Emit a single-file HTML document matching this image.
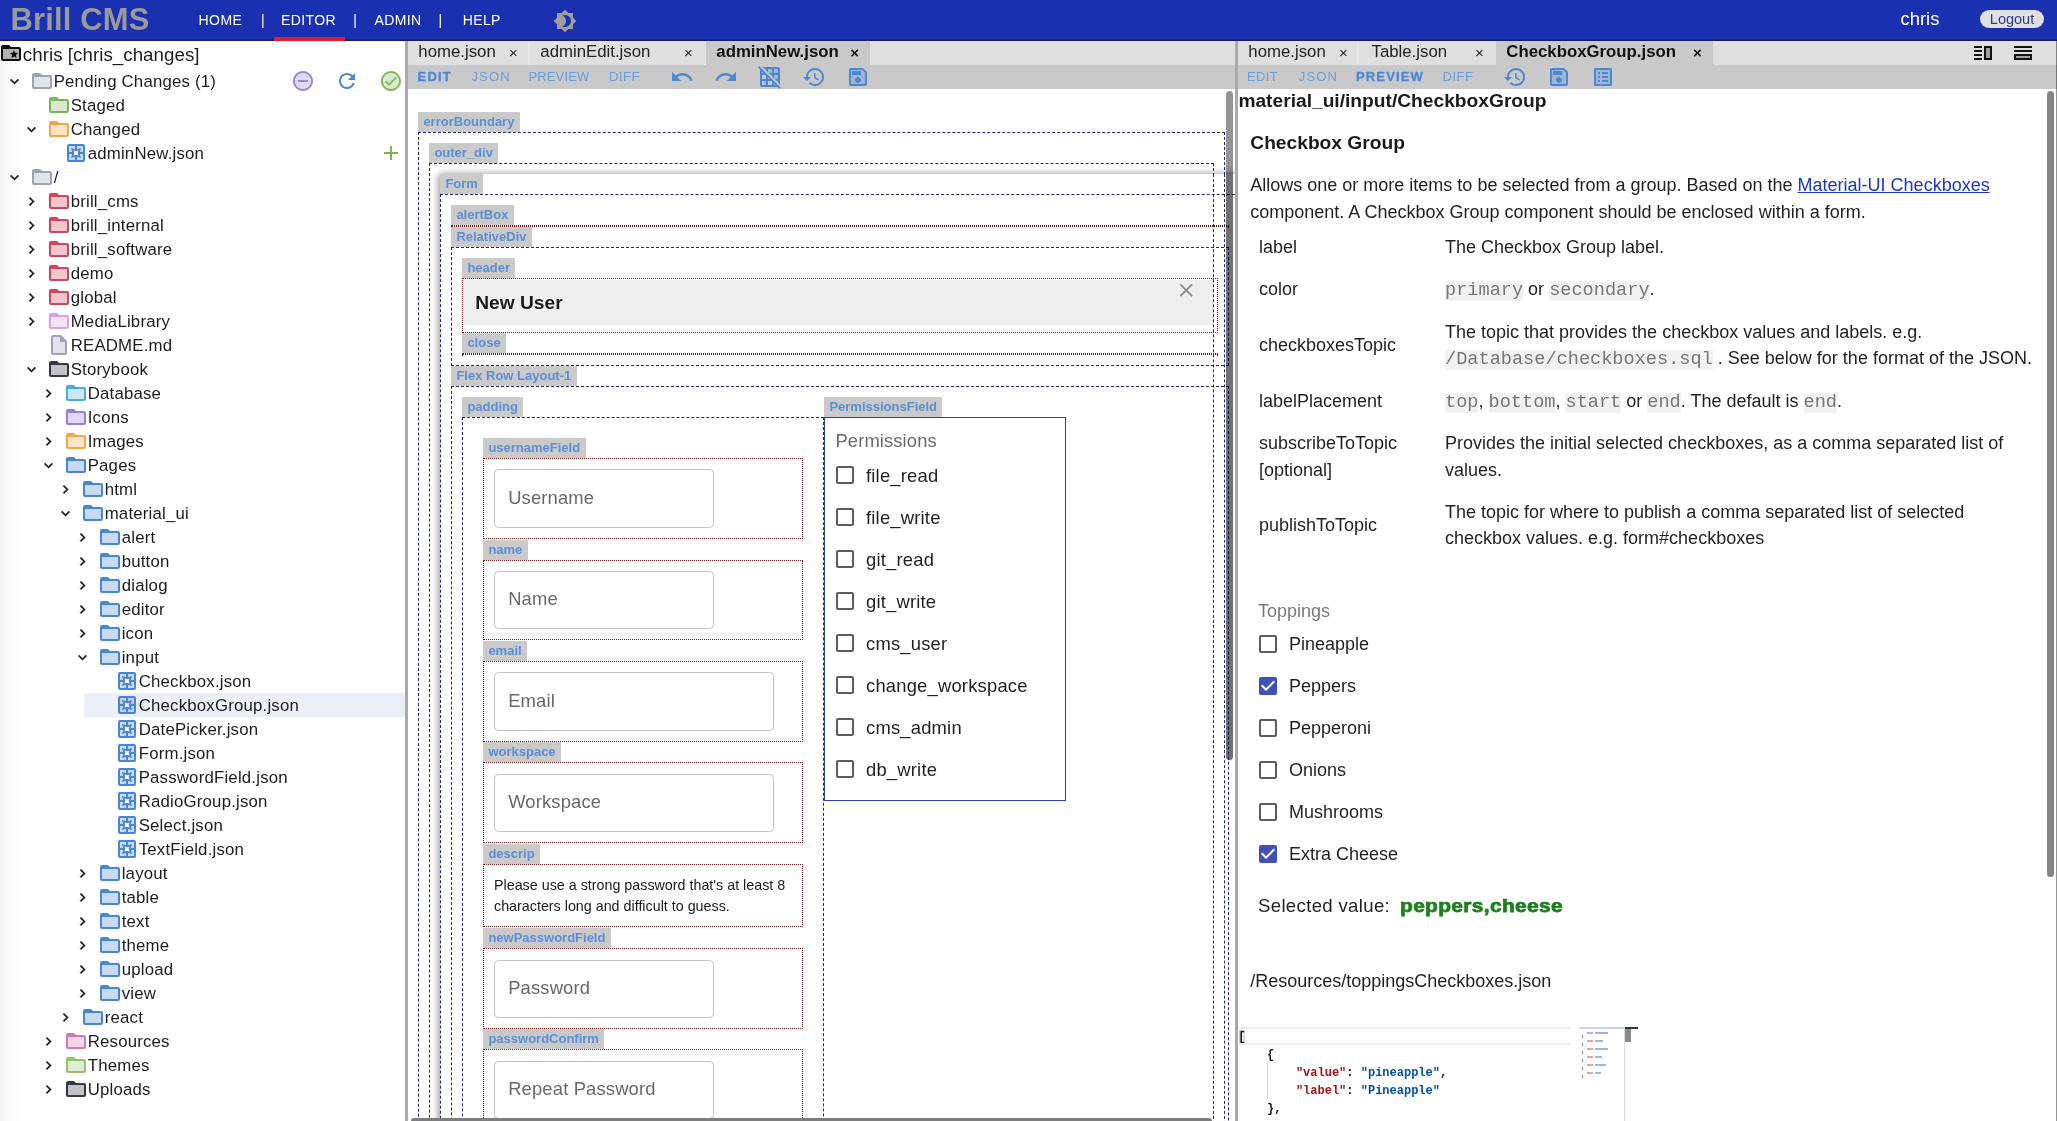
<!DOCTYPE html>
<html><head><meta charset="utf-8"><title>Brill CMS</title>
<style>
*{box-sizing:border-box;margin:0;padding:0}
html,body{width:2057px;height:1121px;overflow:hidden;background:#fff;font-family:"Liberation Sans",sans-serif;color:#212121}
body{position:relative;filter:contrast(1)}
.ic{position:absolute;display:block}
.abs{position:absolute}
#hdr{position:absolute;left:0;top:0;width:2057px;height:40.700px;background:#1931b0;box-shadow:inset 0 -1.500px 0 rgba(0,0,40,.4)}
#logo{position:absolute;left:10.500px;top:0;font-size:30.9px;font-weight:bold;color:#9a9a9a;line-height:39.800px;white-space:nowrap;letter-spacing:.2px}
.nav{position:absolute;top:0;height:40px;line-height:40px;font-size:14px;color:#fff;white-space:nowrap;letter-spacing:.4px}
#uline{position:absolute;left:274px;top:36.500px;width:71px;height:5px;background:#ea1a2e}
#user{position:absolute;left:1900.500px;top:0;line-height:38px;font-size:18.4px;color:#fff}
#logout{position:absolute;left:1980px;top:10px;width:64px;height:18.4px;border-radius:9.2px;background:#e0e0e0;color:#2c3a9c;font-size:14.5px;line-height:18.4px;text-align:center}
/* left tree */
#left{position:absolute;left:0;top:41px;width:405px;height:1080px;background:linear-gradient(90deg,#f5f5f5 0,#fafafa 9px,#fdfdfd 18px,#fff 30px);overflow:hidden}
.row{position:absolute;left:0;width:405px;height:24px;font-size:16.8px;letter-spacing:.2px;line-height:24px;white-space:nowrap;color:#1c1c1c}
.row span{position:absolute;top:.800px}
.sel{position:absolute;left:84px;top:652px;width:321px;height:24px;background:#eceef8}
#split1{position:absolute;left:405px;top:41px;width:3px;height:1080px;background:#aaa}
#split2{position:absolute;left:1235px;top:41px;width:3px;height:1080px;background:#aaa}
/* panels */
.tabbar{position:absolute;top:41px;height:24px;background:#dfdfdf;box-shadow:inset 0 1.200px 0 #dfe5fa}
.toolbar{position:absolute;top:64.800px;height:23.800px;background:#c9c9c9}
.tab{position:absolute;top:0;height:24px;font-size:16.8px;line-height:22px;color:#222;white-space:nowrap}
.tab.act{background:#c9c9c9;font-weight:bold;color:#111}
.tab .x{position:absolute;top:0;font-size:15px;line-height:23px;font-weight:normal}
.tsep{position:absolute;top:0;width:2px;height:24px;background:#e6e6e6}
.tb{position:absolute;top:0;font-size:13px;line-height:24px;color:#6a9fd9;white-space:nowrap}
.tb.b{font-weight:bold;color:#4a88d6;-webkit-text-stroke:.3px #4a88d6}

.lab{position:absolute;height:20px;padding:0 5.400px;background:#cacaca;color:#5a8fd5;font-size:13px;font-weight:bold;line-height:20px;white-space:nowrap}
.bx{position:absolute}
.bx.dash{border:1px dashed #1d2588}
.bx.dot{border:1px dotted #7e1010}
.bx.solid{border:1px solid #2f40b6}
.inp{position:absolute;border:1px solid #c2c2c2;border-radius:4.500px;background:#fff}
.sbar{position:absolute;background:#7e7e7e;border-radius:3.500px}
.lnk{color:#1b36c8;text-decoration:underline}
code{font-family:"Liberation Mono",monospace;font-size:18.6px;color:#777;background:#f1f1f1;padding:0;display:inline-block;line-height:20px;height:20px;vertical-align:baseline}
.mono{position:absolute;left:.300px;margin:0;font-family:"Liberation Mono",monospace;font-size:12px;font-weight:bold;line-height:18px;color:#111;white-space:pre}
#right{color:#1f1f1f}
</style></head><body>

<div id="hdr">
<div id="logo">Brill CMS</div>
<div class="nav" style="left:198.6px">HOME</div>
<div class="nav" style="left:261px">|</div>
<div class="nav" style="left:281px">EDITOR</div>
<div class="nav" style="left:353.3px">|</div>
<div class="nav" style="left:374.4px">ADMIN</div>
<div class="nav" style="left:438.4px">|</div>
<div class="nav" style="left:462.7px">HELP</div>
<svg class="ic" width="24" height="24" viewBox="0 0 24 24" fill="#9e9e9e" style="left:552.850px;top:8.900px"><path d="M20 8.690V4h-4.690L12 .690 8.690 4H4v4.690L.690 12 4 15.310V20h4.690L12 23.310 15.310 20H20v-4.690L23.310 12 20 8.690zM12 18c-.890 0-1.740-.200-2.500-.550C11.560 16.500 13 14.420 13 12s-1.440-4.500-3.500-5.450C10.260 6.200 11.110 6 12 6c3.310 0 6 2.690 6 6s-2.690 6-6 6z"/></svg>
<div id="user">chris</div><div id="logout">Logout</div>
</div><div id="uline"></div>
<div id="left">
<div class="sel"></div>
<svg class="ic" width="24" height="24" viewBox="0 0 24 24" fill="#111" style="left:-1px;top:0px"><path d="M4 8h16v10H4zM15 9l1.190 2.790 3.030.260-2.300 1.990.690 2.960L15 15.470l-2.610 1.570.690-2.960-2.300-1.990 3.030-.260L15 9z" opacity=".3"/><path d="M20 6h-8l-2-2H4c-1.100 0-2 .9-2 2v12c0 1.100.9 2 2 2h16c1.100 0 2-.9 2-2V8c0-1.100-.9-2-2-2zm0 12H4V8h16v10zm-6.920-3.960L12.390 17 15 15.470 17.610 17l-.690-2.960 2.300-1.990-3.030-.260L15 9l-1.190 2.790-3.030.260z"/></svg>
<div class="row" style="top:1px;font-size:18.7px;letter-spacing:.06px"><span style="left:22.800px;top:1.400px">chris [chris_changes]</span></div>
<div class="row" style="top:28px"><svg class="ic" width="17" height="17" viewBox="0 0 24 24" fill="#222" stroke="#222" stroke-width=".7" style="left:6.4px;top:3.500px"><path d="M16.59 8.59L12 13.17 7.41 8.59 6 10l6 6 6-6z"/></svg><svg class="ic" width="24" height="24" viewBox="0 0 24 24" fill="#9da3b4" style="left:30px;top:0"><path d="M4 8h16v10H4z" opacity=".3"/><path d="M20 6h-8l-2-2H4c-1.100 0-1.990.9-1.990 2L2 18c0 1.100.9 2 2 2h16c1.100 0 2-.9 2-2V8c0-1.100-.9-2-2-2zm0 12H4V8h16v10z"/></svg><span style="left:53.7px">Pending Changes (1)</span></div>
<div class="row" style="top:52px"><svg class="ic" width="24" height="24" viewBox="0 0 24 24" fill="#7fb55a" style="left:47px;top:0"><path d="M4 8h16v10H4z" opacity=".3"/><path d="M20 6h-8l-2-2H4c-1.100 0-1.990.9-1.990 2L2 18c0 1.100.9 2 2 2h16c1.100 0 2-.9 2-2V8c0-1.100-.9-2-2-2zm0 12H4V8h16v10z"/></svg><span style="left:70.7px">Staged</span></div>
<div class="row" style="top:76px"><svg class="ic" width="17" height="17" viewBox="0 0 24 24" fill="#222" stroke="#222" stroke-width=".7" style="left:23.4px;top:3.500px"><path d="M16.59 8.59L12 13.17 7.41 8.59 6 10l6 6 6-6z"/></svg><svg class="ic" width="24" height="24" viewBox="0 0 24 24" fill="#f0a848" style="left:47px;top:0"><path d="M4 8h16v10H4z" opacity=".3"/><path d="M20 6h-8l-2-2H4c-1.100 0-1.990.9-1.990 2L2 18c0 1.100.9 2 2 2h16c1.100 0 2-.9 2-2V8c0-1.100-.9-2-2-2zm0 12H4V8h16v10z"/></svg><span style="left:70.7px">Changed</span></div>
<div class="row" style="top:100px"><svg class="ic" width="24" height="24" viewBox="0 0 24 24" fill="#4a86cf" style="left:64px;top:0"><path d="M5 5h6v3L7 7l1 4H5zM13 5h6v6h-3l1-4-4 1zM5 13h3l-1 4 4-1v3H5zM19 13v6h-6v-3l4 1-1-4z" opacity=".3"/><path fill-rule="evenodd" d="M5 3h14a2 2 0 0 1 2 2v14a2 2 0 0 1-2 2H5a2 2 0 0 1-2-2V5a2 2 0 0 1 2-2zM5 5v6h3L7 7l4 1V5zM13 5v3l4-1-1 4h3V5zM5 13v6h6v-3l-4 1 1-4zM16 13l1 4-4-1v3h6v-6zM9.600 9.600L12 10.300l2.400-.700L13.700 12l.700 2.400L12 13.700l-2.400.700L10.300 12z"/></svg><span style="left:87.7px">adminNew.json</span></div>
<div class="row" style="top:124px"><svg class="ic" width="17" height="17" viewBox="0 0 24 24" fill="#222" stroke="#222" stroke-width=".7" style="left:6.4px;top:3.500px"><path d="M16.59 8.59L12 13.17 7.41 8.59 6 10l6 6 6-6z"/></svg><svg class="ic" width="24" height="24" viewBox="0 0 24 24" fill="#9da3b4" style="left:30px;top:0"><path d="M4 8h16v10H4z" opacity=".3"/><path d="M20 6h-8l-2-2H4c-1.100 0-1.990.9-1.990 2L2 18c0 1.100.9 2 2 2h16c1.100 0 2-.9 2-2V8c0-1.100-.9-2-2-2zm0 12H4V8h16v10z"/></svg><span style="left:53.7px">/</span></div>
<div class="row" style="top:148px"><svg class="ic" width="17" height="17" viewBox="0 0 24 24" fill="#222" stroke="#222" stroke-width=".7" style="left:23.4px;top:3.500px"><path d="M10 6L8.59 7.41 13.17 12l-4.58 4.59L10 18l6-6z"/></svg><svg class="ic" width="24" height="24" viewBox="0 0 24 24" fill="#d2455a" style="left:47px;top:0"><path d="M4 8h16v10H4z" opacity=".3"/><path d="M20 6h-8l-2-2H4c-1.100 0-1.990.9-1.990 2L2 18c0 1.100.9 2 2 2h16c1.100 0 2-.9 2-2V8c0-1.100-.9-2-2-2zm0 12H4V8h16v10z"/></svg><span style="left:70.7px">brill_cms</span></div>
<div class="row" style="top:172px"><svg class="ic" width="17" height="17" viewBox="0 0 24 24" fill="#222" stroke="#222" stroke-width=".7" style="left:23.4px;top:3.500px"><path d="M10 6L8.59 7.41 13.17 12l-4.58 4.59L10 18l6-6z"/></svg><svg class="ic" width="24" height="24" viewBox="0 0 24 24" fill="#d2455a" style="left:47px;top:0"><path d="M4 8h16v10H4z" opacity=".3"/><path d="M20 6h-8l-2-2H4c-1.100 0-1.990.9-1.990 2L2 18c0 1.100.9 2 2 2h16c1.100 0 2-.9 2-2V8c0-1.100-.9-2-2-2zm0 12H4V8h16v10z"/></svg><span style="left:70.7px">brill_internal</span></div>
<div class="row" style="top:196px"><svg class="ic" width="17" height="17" viewBox="0 0 24 24" fill="#222" stroke="#222" stroke-width=".7" style="left:23.4px;top:3.500px"><path d="M10 6L8.59 7.41 13.17 12l-4.58 4.59L10 18l6-6z"/></svg><svg class="ic" width="24" height="24" viewBox="0 0 24 24" fill="#d2455a" style="left:47px;top:0"><path d="M4 8h16v10H4z" opacity=".3"/><path d="M20 6h-8l-2-2H4c-1.100 0-1.990.9-1.990 2L2 18c0 1.100.9 2 2 2h16c1.100 0 2-.9 2-2V8c0-1.100-.9-2-2-2zm0 12H4V8h16v10z"/></svg><span style="left:70.7px">brill_software</span></div>
<div class="row" style="top:220px"><svg class="ic" width="17" height="17" viewBox="0 0 24 24" fill="#222" stroke="#222" stroke-width=".7" style="left:23.4px;top:3.500px"><path d="M10 6L8.59 7.41 13.17 12l-4.58 4.59L10 18l6-6z"/></svg><svg class="ic" width="24" height="24" viewBox="0 0 24 24" fill="#d2455a" style="left:47px;top:0"><path d="M4 8h16v10H4z" opacity=".3"/><path d="M20 6h-8l-2-2H4c-1.100 0-1.990.9-1.990 2L2 18c0 1.100.9 2 2 2h16c1.100 0 2-.9 2-2V8c0-1.100-.9-2-2-2zm0 12H4V8h16v10z"/></svg><span style="left:70.7px">demo</span></div>
<div class="row" style="top:244px"><svg class="ic" width="17" height="17" viewBox="0 0 24 24" fill="#222" stroke="#222" stroke-width=".7" style="left:23.4px;top:3.500px"><path d="M10 6L8.59 7.41 13.17 12l-4.58 4.59L10 18l6-6z"/></svg><svg class="ic" width="24" height="24" viewBox="0 0 24 24" fill="#d2455a" style="left:47px;top:0"><path d="M4 8h16v10H4z" opacity=".3"/><path d="M20 6h-8l-2-2H4c-1.100 0-1.990.9-1.990 2L2 18c0 1.100.9 2 2 2h16c1.100 0 2-.9 2-2V8c0-1.100-.9-2-2-2zm0 12H4V8h16v10z"/></svg><span style="left:70.7px">global</span></div>
<div class="row" style="top:268px"><svg class="ic" width="17" height="17" viewBox="0 0 24 24" fill="#222" stroke="#222" stroke-width=".7" style="left:23.4px;top:3.500px"><path d="M10 6L8.59 7.41 13.17 12l-4.58 4.59L10 18l6-6z"/></svg><svg class="ic" width="24" height="24" viewBox="0 0 24 24" fill="#d9a0e6" style="left:47px;top:0"><path d="M4 8h16v10H4z" opacity=".3"/><path d="M20 6h-8l-2-2H4c-1.100 0-1.990.9-1.990 2L2 18c0 1.100.9 2 2 2h16c1.100 0 2-.9 2-2V8c0-1.100-.9-2-2-2zm0 12H4V8h16v10z"/></svg><span style="left:70.7px">MediaLibrary</span></div>
<div class="row" style="top:292px"><svg class="ic" width="24" height="24" viewBox="0 0 24 24" fill="#9da3b4" style="left:47px;top:0"><path d="M13 4H6v16h12V9h-5V4z" opacity=".3"/><path d="M18 20H6V4h7v5h5v11zM14 2H6c-1.1 0-2 .9-2 2l.01 16c0 1.1.89 2 1.99 2H18c1.100 0 2-.9 2-2V8l-6-6z"/></svg><span style="left:70.7px">README.md</span></div>
<div class="row" style="top:316px"><svg class="ic" width="17" height="17" viewBox="0 0 24 24" fill="#222" stroke="#222" stroke-width=".7" style="left:23.4px;top:3.500px"><path d="M16.59 8.59L12 13.17 7.41 8.59 6 10l6 6 6-6z"/></svg><svg class="ic" width="24" height="24" viewBox="0 0 24 24" fill="#333842" style="left:47px;top:0"><path d="M4 8h16v10H4z" opacity=".3"/><path d="M20 6h-8l-2-2H4c-1.100 0-1.990.9-1.990 2L2 18c0 1.100.9 2 2 2h16c1.100 0 2-.9 2-2V8c0-1.100-.9-2-2-2zm0 12H4V8h16v10z"/></svg><span style="left:70.7px">Storybook</span></div>
<div class="row" style="top:340px"><svg class="ic" width="17" height="17" viewBox="0 0 24 24" fill="#222" stroke="#222" stroke-width=".7" style="left:40.4px;top:3.500px"><path d="M10 6L8.59 7.41 13.17 12l-4.58 4.59L10 18l6-6z"/></svg><svg class="ic" width="24" height="24" viewBox="0 0 24 24" fill="#4ab0cf" style="left:64px;top:0"><path d="M4 8h16v10H4z" opacity=".3"/><path d="M20 6h-8l-2-2H4c-1.100 0-1.990.9-1.990 2L2 18c0 1.100.9 2 2 2h16c1.100 0 2-.9 2-2V8c0-1.100-.9-2-2-2zm0 12H4V8h16v10z"/></svg><span style="left:87.7px">Database</span></div>
<div class="row" style="top:364px"><svg class="ic" width="17" height="17" viewBox="0 0 24 24" fill="#222" stroke="#222" stroke-width=".7" style="left:40.4px;top:3.500px"><path d="M10 6L8.59 7.41 13.17 12l-4.58 4.59L10 18l6-6z"/></svg><svg class="ic" width="24" height="24" viewBox="0 0 24 24" fill="#9a7fd6" style="left:64px;top:0"><path d="M4 8h16v10H4z" opacity=".3"/><path d="M20 6h-8l-2-2H4c-1.100 0-1.990.9-1.990 2L2 18c0 1.100.9 2 2 2h16c1.100 0 2-.9 2-2V8c0-1.100-.9-2-2-2zm0 12H4V8h16v10z"/></svg><span style="left:87.7px">Icons</span></div>
<div class="row" style="top:388px"><svg class="ic" width="17" height="17" viewBox="0 0 24 24" fill="#222" stroke="#222" stroke-width=".7" style="left:40.4px;top:3.500px"><path d="M10 6L8.59 7.41 13.17 12l-4.58 4.59L10 18l6-6z"/></svg><svg class="ic" width="24" height="24" viewBox="0 0 24 24" fill="#f0a848" style="left:64px;top:0"><path d="M4 8h16v10H4z" opacity=".3"/><path d="M20 6h-8l-2-2H4c-1.100 0-1.990.9-1.990 2L2 18c0 1.100.9 2 2 2h16c1.100 0 2-.9 2-2V8c0-1.100-.9-2-2-2zm0 12H4V8h16v10z"/></svg><span style="left:87.7px">Images</span></div>
<div class="row" style="top:412px"><svg class="ic" width="17" height="17" viewBox="0 0 24 24" fill="#222" stroke="#222" stroke-width=".7" style="left:40.4px;top:3.500px"><path d="M16.59 8.59L12 13.17 7.41 8.59 6 10l6 6 6-6z"/></svg><svg class="ic" width="24" height="24" viewBox="0 0 24 24" fill="#4a86cf" style="left:64px;top:0"><path d="M4 8h16v10H4z" opacity=".3"/><path d="M20 6h-8l-2-2H4c-1.100 0-1.990.9-1.990 2L2 18c0 1.100.9 2 2 2h16c1.100 0 2-.9 2-2V8c0-1.100-.9-2-2-2zm0 12H4V8h16v10z"/></svg><span style="left:87.7px">Pages</span></div>
<div class="row" style="top:436px"><svg class="ic" width="17" height="17" viewBox="0 0 24 24" fill="#222" stroke="#222" stroke-width=".7" style="left:57.4px;top:3.500px"><path d="M10 6L8.59 7.41 13.17 12l-4.58 4.59L10 18l6-6z"/></svg><svg class="ic" width="24" height="24" viewBox="0 0 24 24" fill="#4a86cf" style="left:81px;top:0"><path d="M4 8h16v10H4z" opacity=".3"/><path d="M20 6h-8l-2-2H4c-1.100 0-1.990.9-1.990 2L2 18c0 1.100.9 2 2 2h16c1.100 0 2-.9 2-2V8c0-1.100-.9-2-2-2zm0 12H4V8h16v10z"/></svg><span style="left:104.7px">html</span></div>
<div class="row" style="top:460px"><svg class="ic" width="17" height="17" viewBox="0 0 24 24" fill="#222" stroke="#222" stroke-width=".7" style="left:57.4px;top:3.500px"><path d="M16.59 8.59L12 13.17 7.41 8.59 6 10l6 6 6-6z"/></svg><svg class="ic" width="24" height="24" viewBox="0 0 24 24" fill="#4a86cf" style="left:81px;top:0"><path d="M4 8h16v10H4z" opacity=".3"/><path d="M20 6h-8l-2-2H4c-1.100 0-1.990.9-1.990 2L2 18c0 1.100.9 2 2 2h16c1.100 0 2-.9 2-2V8c0-1.100-.9-2-2-2zm0 12H4V8h16v10z"/></svg><span style="left:104.7px">material_ui</span></div>
<div class="row" style="top:484px"><svg class="ic" width="17" height="17" viewBox="0 0 24 24" fill="#222" stroke="#222" stroke-width=".7" style="left:74.4px;top:3.500px"><path d="M10 6L8.59 7.41 13.17 12l-4.58 4.59L10 18l6-6z"/></svg><svg class="ic" width="24" height="24" viewBox="0 0 24 24" fill="#4a86cf" style="left:98px;top:0"><path d="M4 8h16v10H4z" opacity=".3"/><path d="M20 6h-8l-2-2H4c-1.100 0-1.990.9-1.990 2L2 18c0 1.100.9 2 2 2h16c1.100 0 2-.9 2-2V8c0-1.100-.9-2-2-2zm0 12H4V8h16v10z"/></svg><span style="left:121.7px">alert</span></div>
<div class="row" style="top:508px"><svg class="ic" width="17" height="17" viewBox="0 0 24 24" fill="#222" stroke="#222" stroke-width=".7" style="left:74.4px;top:3.500px"><path d="M10 6L8.59 7.41 13.17 12l-4.58 4.59L10 18l6-6z"/></svg><svg class="ic" width="24" height="24" viewBox="0 0 24 24" fill="#4a86cf" style="left:98px;top:0"><path d="M4 8h16v10H4z" opacity=".3"/><path d="M20 6h-8l-2-2H4c-1.100 0-1.990.9-1.990 2L2 18c0 1.100.9 2 2 2h16c1.100 0 2-.9 2-2V8c0-1.100-.9-2-2-2zm0 12H4V8h16v10z"/></svg><span style="left:121.7px">button</span></div>
<div class="row" style="top:532px"><svg class="ic" width="17" height="17" viewBox="0 0 24 24" fill="#222" stroke="#222" stroke-width=".7" style="left:74.4px;top:3.500px"><path d="M10 6L8.59 7.41 13.17 12l-4.58 4.59L10 18l6-6z"/></svg><svg class="ic" width="24" height="24" viewBox="0 0 24 24" fill="#4a86cf" style="left:98px;top:0"><path d="M4 8h16v10H4z" opacity=".3"/><path d="M20 6h-8l-2-2H4c-1.100 0-1.990.9-1.990 2L2 18c0 1.100.9 2 2 2h16c1.100 0 2-.9 2-2V8c0-1.100-.9-2-2-2zm0 12H4V8h16v10z"/></svg><span style="left:121.7px">dialog</span></div>
<div class="row" style="top:556px"><svg class="ic" width="17" height="17" viewBox="0 0 24 24" fill="#222" stroke="#222" stroke-width=".7" style="left:74.4px;top:3.500px"><path d="M10 6L8.59 7.41 13.17 12l-4.58 4.59L10 18l6-6z"/></svg><svg class="ic" width="24" height="24" viewBox="0 0 24 24" fill="#4a86cf" style="left:98px;top:0"><path d="M4 8h16v10H4z" opacity=".3"/><path d="M20 6h-8l-2-2H4c-1.100 0-1.990.9-1.990 2L2 18c0 1.100.9 2 2 2h16c1.100 0 2-.9 2-2V8c0-1.100-.9-2-2-2zm0 12H4V8h16v10z"/></svg><span style="left:121.7px">editor</span></div>
<div class="row" style="top:580px"><svg class="ic" width="17" height="17" viewBox="0 0 24 24" fill="#222" stroke="#222" stroke-width=".7" style="left:74.4px;top:3.500px"><path d="M10 6L8.59 7.41 13.17 12l-4.58 4.59L10 18l6-6z"/></svg><svg class="ic" width="24" height="24" viewBox="0 0 24 24" fill="#4a86cf" style="left:98px;top:0"><path d="M4 8h16v10H4z" opacity=".3"/><path d="M20 6h-8l-2-2H4c-1.100 0-1.990.9-1.990 2L2 18c0 1.100.9 2 2 2h16c1.100 0 2-.9 2-2V8c0-1.100-.9-2-2-2zm0 12H4V8h16v10z"/></svg><span style="left:121.7px">icon</span></div>
<div class="row" style="top:604px"><svg class="ic" width="17" height="17" viewBox="0 0 24 24" fill="#222" stroke="#222" stroke-width=".7" style="left:74.4px;top:3.500px"><path d="M16.59 8.59L12 13.17 7.41 8.59 6 10l6 6 6-6z"/></svg><svg class="ic" width="24" height="24" viewBox="0 0 24 24" fill="#4a86cf" style="left:98px;top:0"><path d="M4 8h16v10H4z" opacity=".3"/><path d="M20 6h-8l-2-2H4c-1.100 0-1.990.9-1.990 2L2 18c0 1.100.9 2 2 2h16c1.100 0 2-.9 2-2V8c0-1.100-.9-2-2-2zm0 12H4V8h16v10z"/></svg><span style="left:121.7px">input</span></div>
<div class="row" style="top:628px"><svg class="ic" width="24" height="24" viewBox="0 0 24 24" fill="#4a86cf" style="left:115px;top:0"><path d="M5 5h6v3L7 7l1 4H5zM13 5h6v6h-3l1-4-4 1zM5 13h3l-1 4 4-1v3H5zM19 13v6h-6v-3l4 1-1-4z" opacity=".3"/><path fill-rule="evenodd" d="M5 3h14a2 2 0 0 1 2 2v14a2 2 0 0 1-2 2H5a2 2 0 0 1-2-2V5a2 2 0 0 1 2-2zM5 5v6h3L7 7l4 1V5zM13 5v3l4-1-1 4h3V5zM5 13v6h6v-3l-4 1 1-4zM16 13l1 4-4-1v3h6v-6zM9.600 9.600L12 10.300l2.400-.700L13.700 12l.700 2.400L12 13.700l-2.400.700L10.300 12z"/></svg><span style="left:138.7px">Checkbox.json</span></div>
<div class="row" style="top:652px"><svg class="ic" width="24" height="24" viewBox="0 0 24 24" fill="#4a86cf" style="left:115px;top:0"><path d="M5 5h6v3L7 7l1 4H5zM13 5h6v6h-3l1-4-4 1zM5 13h3l-1 4 4-1v3H5zM19 13v6h-6v-3l4 1-1-4z" opacity=".3"/><path fill-rule="evenodd" d="M5 3h14a2 2 0 0 1 2 2v14a2 2 0 0 1-2 2H5a2 2 0 0 1-2-2V5a2 2 0 0 1 2-2zM5 5v6h3L7 7l4 1V5zM13 5v3l4-1-1 4h3V5zM5 13v6h6v-3l-4 1 1-4zM16 13l1 4-4-1v3h6v-6zM9.600 9.600L12 10.300l2.400-.700L13.700 12l.700 2.400L12 13.700l-2.400.700L10.300 12z"/></svg><span style="left:138.7px">CheckboxGroup.json</span></div>
<div class="row" style="top:676px"><svg class="ic" width="24" height="24" viewBox="0 0 24 24" fill="#4a86cf" style="left:115px;top:0"><path d="M5 5h6v3L7 7l1 4H5zM13 5h6v6h-3l1-4-4 1zM5 13h3l-1 4 4-1v3H5zM19 13v6h-6v-3l4 1-1-4z" opacity=".3"/><path fill-rule="evenodd" d="M5 3h14a2 2 0 0 1 2 2v14a2 2 0 0 1-2 2H5a2 2 0 0 1-2-2V5a2 2 0 0 1 2-2zM5 5v6h3L7 7l4 1V5zM13 5v3l4-1-1 4h3V5zM5 13v6h6v-3l-4 1 1-4zM16 13l1 4-4-1v3h6v-6zM9.600 9.600L12 10.300l2.400-.700L13.700 12l.700 2.400L12 13.700l-2.400.700L10.300 12z"/></svg><span style="left:138.7px">DatePicker.json</span></div>
<div class="row" style="top:700px"><svg class="ic" width="24" height="24" viewBox="0 0 24 24" fill="#4a86cf" style="left:115px;top:0"><path d="M5 5h6v3L7 7l1 4H5zM13 5h6v6h-3l1-4-4 1zM5 13h3l-1 4 4-1v3H5zM19 13v6h-6v-3l4 1-1-4z" opacity=".3"/><path fill-rule="evenodd" d="M5 3h14a2 2 0 0 1 2 2v14a2 2 0 0 1-2 2H5a2 2 0 0 1-2-2V5a2 2 0 0 1 2-2zM5 5v6h3L7 7l4 1V5zM13 5v3l4-1-1 4h3V5zM5 13v6h6v-3l-4 1 1-4zM16 13l1 4-4-1v3h6v-6zM9.600 9.600L12 10.300l2.400-.700L13.700 12l.700 2.400L12 13.700l-2.400.700L10.300 12z"/></svg><span style="left:138.7px">Form.json</span></div>
<div class="row" style="top:724px"><svg class="ic" width="24" height="24" viewBox="0 0 24 24" fill="#4a86cf" style="left:115px;top:0"><path d="M5 5h6v3L7 7l1 4H5zM13 5h6v6h-3l1-4-4 1zM5 13h3l-1 4 4-1v3H5zM19 13v6h-6v-3l4 1-1-4z" opacity=".3"/><path fill-rule="evenodd" d="M5 3h14a2 2 0 0 1 2 2v14a2 2 0 0 1-2 2H5a2 2 0 0 1-2-2V5a2 2 0 0 1 2-2zM5 5v6h3L7 7l4 1V5zM13 5v3l4-1-1 4h3V5zM5 13v6h6v-3l-4 1 1-4zM16 13l1 4-4-1v3h6v-6zM9.600 9.600L12 10.300l2.400-.700L13.700 12l.700 2.400L12 13.700l-2.400.700L10.300 12z"/></svg><span style="left:138.7px">PasswordField.json</span></div>
<div class="row" style="top:748px"><svg class="ic" width="24" height="24" viewBox="0 0 24 24" fill="#4a86cf" style="left:115px;top:0"><path d="M5 5h6v3L7 7l1 4H5zM13 5h6v6h-3l1-4-4 1zM5 13h3l-1 4 4-1v3H5zM19 13v6h-6v-3l4 1-1-4z" opacity=".3"/><path fill-rule="evenodd" d="M5 3h14a2 2 0 0 1 2 2v14a2 2 0 0 1-2 2H5a2 2 0 0 1-2-2V5a2 2 0 0 1 2-2zM5 5v6h3L7 7l4 1V5zM13 5v3l4-1-1 4h3V5zM5 13v6h6v-3l-4 1 1-4zM16 13l1 4-4-1v3h6v-6zM9.600 9.600L12 10.300l2.400-.700L13.700 12l.700 2.400L12 13.700l-2.400.700L10.300 12z"/></svg><span style="left:138.7px">RadioGroup.json</span></div>
<div class="row" style="top:772px"><svg class="ic" width="24" height="24" viewBox="0 0 24 24" fill="#4a86cf" style="left:115px;top:0"><path d="M5 5h6v3L7 7l1 4H5zM13 5h6v6h-3l1-4-4 1zM5 13h3l-1 4 4-1v3H5zM19 13v6h-6v-3l4 1-1-4z" opacity=".3"/><path fill-rule="evenodd" d="M5 3h14a2 2 0 0 1 2 2v14a2 2 0 0 1-2 2H5a2 2 0 0 1-2-2V5a2 2 0 0 1 2-2zM5 5v6h3L7 7l4 1V5zM13 5v3l4-1-1 4h3V5zM5 13v6h6v-3l-4 1 1-4zM16 13l1 4-4-1v3h6v-6zM9.600 9.600L12 10.300l2.400-.700L13.700 12l.700 2.400L12 13.700l-2.400.700L10.300 12z"/></svg><span style="left:138.7px">Select.json</span></div>
<div class="row" style="top:796px"><svg class="ic" width="24" height="24" viewBox="0 0 24 24" fill="#4a86cf" style="left:115px;top:0"><path d="M5 5h6v3L7 7l1 4H5zM13 5h6v6h-3l1-4-4 1zM5 13h3l-1 4 4-1v3H5zM19 13v6h-6v-3l4 1-1-4z" opacity=".3"/><path fill-rule="evenodd" d="M5 3h14a2 2 0 0 1 2 2v14a2 2 0 0 1-2 2H5a2 2 0 0 1-2-2V5a2 2 0 0 1 2-2zM5 5v6h3L7 7l4 1V5zM13 5v3l4-1-1 4h3V5zM5 13v6h6v-3l-4 1 1-4zM16 13l1 4-4-1v3h6v-6zM9.600 9.600L12 10.300l2.400-.700L13.700 12l.700 2.400L12 13.700l-2.400.700L10.300 12z"/></svg><span style="left:138.7px">TextField.json</span></div>
<div class="row" style="top:820px"><svg class="ic" width="17" height="17" viewBox="0 0 24 24" fill="#222" stroke="#222" stroke-width=".7" style="left:74.4px;top:3.500px"><path d="M10 6L8.59 7.41 13.17 12l-4.58 4.59L10 18l6-6z"/></svg><svg class="ic" width="24" height="24" viewBox="0 0 24 24" fill="#4a86cf" style="left:98px;top:0"><path d="M4 8h16v10H4z" opacity=".3"/><path d="M20 6h-8l-2-2H4c-1.100 0-1.990.9-1.990 2L2 18c0 1.100.9 2 2 2h16c1.100 0 2-.9 2-2V8c0-1.100-.9-2-2-2zm0 12H4V8h16v10z"/></svg><span style="left:121.7px">layout</span></div>
<div class="row" style="top:844px"><svg class="ic" width="17" height="17" viewBox="0 0 24 24" fill="#222" stroke="#222" stroke-width=".7" style="left:74.4px;top:3.500px"><path d="M10 6L8.59 7.41 13.17 12l-4.58 4.59L10 18l6-6z"/></svg><svg class="ic" width="24" height="24" viewBox="0 0 24 24" fill="#4a86cf" style="left:98px;top:0"><path d="M4 8h16v10H4z" opacity=".3"/><path d="M20 6h-8l-2-2H4c-1.100 0-1.990.9-1.990 2L2 18c0 1.100.9 2 2 2h16c1.100 0 2-.9 2-2V8c0-1.100-.9-2-2-2zm0 12H4V8h16v10z"/></svg><span style="left:121.7px">table</span></div>
<div class="row" style="top:868px"><svg class="ic" width="17" height="17" viewBox="0 0 24 24" fill="#222" stroke="#222" stroke-width=".7" style="left:74.4px;top:3.500px"><path d="M10 6L8.59 7.41 13.17 12l-4.58 4.59L10 18l6-6z"/></svg><svg class="ic" width="24" height="24" viewBox="0 0 24 24" fill="#4a86cf" style="left:98px;top:0"><path d="M4 8h16v10H4z" opacity=".3"/><path d="M20 6h-8l-2-2H4c-1.100 0-1.990.9-1.990 2L2 18c0 1.100.9 2 2 2h16c1.100 0 2-.9 2-2V8c0-1.100-.9-2-2-2zm0 12H4V8h16v10z"/></svg><span style="left:121.7px">text</span></div>
<div class="row" style="top:892px"><svg class="ic" width="17" height="17" viewBox="0 0 24 24" fill="#222" stroke="#222" stroke-width=".7" style="left:74.4px;top:3.500px"><path d="M10 6L8.59 7.41 13.17 12l-4.58 4.59L10 18l6-6z"/></svg><svg class="ic" width="24" height="24" viewBox="0 0 24 24" fill="#4a86cf" style="left:98px;top:0"><path d="M4 8h16v10H4z" opacity=".3"/><path d="M20 6h-8l-2-2H4c-1.100 0-1.990.9-1.990 2L2 18c0 1.100.9 2 2 2h16c1.100 0 2-.9 2-2V8c0-1.100-.9-2-2-2zm0 12H4V8h16v10z"/></svg><span style="left:121.7px">theme</span></div>
<div class="row" style="top:916px"><svg class="ic" width="17" height="17" viewBox="0 0 24 24" fill="#222" stroke="#222" stroke-width=".7" style="left:74.4px;top:3.500px"><path d="M10 6L8.59 7.41 13.17 12l-4.58 4.59L10 18l6-6z"/></svg><svg class="ic" width="24" height="24" viewBox="0 0 24 24" fill="#4a86cf" style="left:98px;top:0"><path d="M4 8h16v10H4z" opacity=".3"/><path d="M20 6h-8l-2-2H4c-1.100 0-1.990.9-1.990 2L2 18c0 1.100.9 2 2 2h16c1.100 0 2-.9 2-2V8c0-1.100-.9-2-2-2zm0 12H4V8h16v10z"/></svg><span style="left:121.7px">upload</span></div>
<div class="row" style="top:940px"><svg class="ic" width="17" height="17" viewBox="0 0 24 24" fill="#222" stroke="#222" stroke-width=".7" style="left:74.4px;top:3.500px"><path d="M10 6L8.59 7.41 13.17 12l-4.58 4.59L10 18l6-6z"/></svg><svg class="ic" width="24" height="24" viewBox="0 0 24 24" fill="#4a86cf" style="left:98px;top:0"><path d="M4 8h16v10H4z" opacity=".3"/><path d="M20 6h-8l-2-2H4c-1.100 0-1.990.9-1.990 2L2 18c0 1.100.9 2 2 2h16c1.100 0 2-.9 2-2V8c0-1.100-.9-2-2-2zm0 12H4V8h16v10z"/></svg><span style="left:121.7px">view</span></div>
<div class="row" style="top:964px"><svg class="ic" width="17" height="17" viewBox="0 0 24 24" fill="#222" stroke="#222" stroke-width=".7" style="left:57.4px;top:3.500px"><path d="M10 6L8.59 7.41 13.17 12l-4.58 4.59L10 18l6-6z"/></svg><svg class="ic" width="24" height="24" viewBox="0 0 24 24" fill="#4a86cf" style="left:81px;top:0"><path d="M4 8h16v10H4z" opacity=".3"/><path d="M20 6h-8l-2-2H4c-1.100 0-1.990.9-1.990 2L2 18c0 1.100.9 2 2 2h16c1.100 0 2-.9 2-2V8c0-1.100-.9-2-2-2zm0 12H4V8h16v10z"/></svg><span style="left:104.7px">react</span></div>
<div class="row" style="top:988px"><svg class="ic" width="17" height="17" viewBox="0 0 24 24" fill="#222" stroke="#222" stroke-width=".7" style="left:40.4px;top:3.500px"><path d="M10 6L8.59 7.41 13.17 12l-4.58 4.59L10 18l6-6z"/></svg><svg class="ic" width="24" height="24" viewBox="0 0 24 24" fill="#d478b0" style="left:64px;top:0"><path d="M4 8h16v10H4z" opacity=".3"/><path d="M20 6h-8l-2-2H4c-1.100 0-1.990.9-1.990 2L2 18c0 1.100.9 2 2 2h16c1.100 0 2-.9 2-2V8c0-1.100-.9-2-2-2zm0 12H4V8h16v10z"/></svg><span style="left:87.7px">Resources</span></div>
<div class="row" style="top:1012px"><svg class="ic" width="17" height="17" viewBox="0 0 24 24" fill="#222" stroke="#222" stroke-width=".7" style="left:40.4px;top:3.500px"><path d="M10 6L8.59 7.41 13.17 12l-4.58 4.59L10 18l6-6z"/></svg><svg class="ic" width="24" height="24" viewBox="0 0 24 24" fill="#94c070" style="left:64px;top:0"><path d="M4 8h16v10H4z" opacity=".3"/><path d="M20 6h-8l-2-2H4c-1.100 0-1.990.9-1.990 2L2 18c0 1.100.9 2 2 2h16c1.100 0 2-.9 2-2V8c0-1.100-.9-2-2-2zm0 12H4V8h16v10z"/></svg><span style="left:87.7px">Themes</span></div>
<div class="row" style="top:1036px"><svg class="ic" width="17" height="17" viewBox="0 0 24 24" fill="#222" stroke="#222" stroke-width=".7" style="left:40.4px;top:3.500px"><path d="M10 6L8.59 7.41 13.17 12l-4.58 4.59L10 18l6-6z"/></svg><svg class="ic" width="24" height="24" viewBox="0 0 24 24" fill="#333842" style="left:64px;top:0"><path d="M4 8h16v10H4z" opacity=".3"/><path d="M20 6h-8l-2-2H4c-1.100 0-1.990.9-1.990 2L2 18c0 1.100.9 2 2 2h16c1.100 0 2-.9 2-2V8c0-1.100-.9-2-2-2zm0 12H4V8h16v10z"/></svg><span style="left:87.7px">Uploads</span></div>
<svg class="ic" width="24" height="24" viewBox="0 0 24 24" fill="#9a86d8" style="left:291px;top:28px"><path d="M12 4c-4.41 0-8 3.59-8 8s3.59 8 8 8 8-3.59 8-8-3.59-8-8-8zm5 9H7v-2h10v2z" opacity=".3"/><path d="M7 11h10v2H7zm5-9C6.480 2 2 6.480 2 12s4.480 10 10 10 10-4.480 10-10S17.520 2 12 2zm0 18c-4.410 0-8-3.590-8-8s3.590-8 8-8 8 3.590 8 8-3.590 8-8 8z"/></svg>
<svg class="ic" width="24" height="24" viewBox="0 0 24 24" fill="#4a88d6" style="left:335px;top:28px"><path d="M17.65 6.35C16.2 4.9 14.21 4 12 4c-4.42 0-7.99 3.58-7.990 8s3.570 8 7.990 8c3.730 0 6.840-2.550 7.730-6h-2.080c-.820 2.330-3.040 4-5.650 4-3.310 0-6-2.690-6-6s2.690-6 6-6c1.660 0 3.140.690 4.220 1.780L13 11h7V4l-2.350 2.350z"/></svg>
<svg class="ic" width="24" height="24" viewBox="0 0 24 24" fill="#86b85c" style="left:379px;top:28px"><path d="M12 4c-4.410 0-8 3.590-8 8s3.590 8 8 8 8-3.590 8-8-3.590-8-8-8zm-2 13l-4-4 1.410-1.410L10 14.170l6.590-6.590L18 9l-8 8z" opacity=".3"/><path d="M12 2C6.480 2 2 6.480 2 12s4.480 10 10 10 10-4.480 10-10S17.520 2 12 2zm0 18c-4.410 0-8-3.590-8-8s3.590-8 8-8 8 3.590 8 8-3.590 8-8 8zm4.590-12.420L10 14.170l-2.590-2.580L6 13l4 4 8-8z"/></svg>
<svg class="ic" width="24" height="24" viewBox="0 0 24 24" fill="#7fb055" style="left:379px;top:100px"><path d="M19 13h-6v6h-2v-6H5v-2h6V5h2v6h6v2z"/></svg>
</div>
<div id="split1"></div><div id="split2"></div>
<div class="tabbar" style="left:408px;width:827px">
<div class="tab" style="left:0;width:120px"><span class="abs" style="left:10.300px">home.json</span><span class="x" style="left:101px">×</span></div>
<div class="tsep" style="left:120px"></div>
<div class="tab" style="left:122px;width:176px"><span class="abs" style="left:10.300px">adminEdit.json</span><span class="x" style="left:154px">×</span></div>
<div class="tab act" style="left:298px;width:164px"><span class="abs" style="left:10.300px">adminNew.json</span><span class="x" style="left:144.300px;font-weight:bold">×</span></div>
</div>
<div class="toolbar" style="left:408px;width:827px">
<div class="tb b" style="left:9.6px;letter-spacing:1.15px">EDIT</div>
<div class="tb" style="left:63.4px;letter-spacing:1.2px">JSON</div>
<div class="tb" style="left:120.4px;letter-spacing:0.15px">PREVIEW</div>
<div class="tb" style="left:201px;letter-spacing:0.5px">DIFF</div>
<svg class="ic" width="24" height="24" viewBox="0 0 24 24" fill="#4a88d6" style="left:262px;top:0"><path d="M12.5 8c-2.650 0-5.050.99-6.900 2.600L2 7v9h9l-3.620-3.620c1.390-1.160 3.160-1.880 5.120-1.880 3.540 0 6.550 2.310 7.600 5.500l2.370-.78C21.080 11.030 17.150 8 12.500 8z"/></svg>
<svg class="ic" width="24" height="24" viewBox="0 0 24 24" fill="#4a88d6" style="left:306px;top:0"><path d="M18.400 10.600C16.550 8.990 14.150 8 11.500 8c-4.650 0-8.580 3.030-9.960 7.220L3.900 16c1.050-3.190 4.050-5.500 7.600-5.500 1.950 0 3.730.72 5.120 1.880L13 16h9V7l-3.600 3.600z"/></svg>
<svg class="ic" width="24" height="24" viewBox="0 0 24 24" fill="#4a88d6" style="left:350px;top:0"><path d="M10 14v2.450L7.550 14zM14 20h2.450L14 17.550zM10 20v-4H6v4zM4 14v-4h-.450L4 10.450zM20 10h-4v3.450l.550.550H20zM14 4h-4v3.450L10.550 8H14zM20 8V4h-4v4zM8 5.450V4H6.550z" opacity=".3"/><path d="M8 4v1.450l2 2V4h4v4h-3.450l2 2H14v1.450l2 2V10h4v4h-3.450l2 2H20v1.450l2 2V4c0-1.100-.900-2-2-2H4.550l2 2H8zm8 0h4v4h-4V4zM1.270 1.270L0 2.550l2 2V20c0 1.100.900 2 2 2h15.460l2 2 1.270-1.270L1.270 1.270zM10 12.550L11.450 14H10v-1.450zm-6-6L5.450 8H4V6.550zM8 20H4v-4h4v4zm0-6H4v-4h3.450l.550.550V14zm6 6h-4v-4h3.450l.550.540V20zm2 0v-1.460L17.460 20H16z"/></svg>
<svg class="ic" width="24" height="24" viewBox="0 0 24 24" fill="#4a88d6" style="left:394px;top:0"><path d="M13 3c-4.970 0-9 4.030-9 9H1l3.890 3.890.07.140L9 12H6c0-3.870 3.130-7 7-7s7 3.130 7 7-3.130 7-7 7c-1.930 0-3.680-.790-4.940-2.060l-1.420 1.420C8.270 19.990 10.510 21 13 21c4.970 0 9-4.030 9-9s-4.030-9-9-9zm-1 5v5l4.280 2.540.72-1.210-3.500-2.080V8H12z"/></svg>
<svg class="ic" width="24" height="24" viewBox="0 0 24 24" fill="#4a88d6" style="left:438px;top:0"><path d="M5 5v14h14V7.830L16.170 5H5zm7 13c-1.660 0-3-1.340-3-3s1.340-3 3-3 3 1.340 3 3-1.340 3-3 3zm3-8H6V6h9v4z" opacity=".3"/><path d="M17 3H5c-1.110 0-2 .9-2 2v14c0 1.100.890 2 2 2h14c1.100 0 2-.900 2-2V7l-4-4zm2 16H5V5h11.170L19 7.830V19zm-7-7c-1.660 0-3 1.340-3 3s1.340 3 3 3 3-1.340 3-3-1.340-3-3-3zM6 6h9v4H6z"/></svg>
</div>
<div class="tabbar" style="left:1238px;width:819px">
<div class="tab" style="left:0;width:119px"><span class="abs" style="left:10.300px">home.json</span><span class="x" style="left:101px">×</span></div>
<div class="tsep" style="left:119px"></div>
<div class="tab" style="left:121px;width:137px"><span class="abs" style="left:12.500px">Table.json</span><span class="x" style="left:116px">×</span></div>
<div class="tab act" style="left:258px;width:217px"><span class="abs" style="left:10.300px">CheckboxGroup.json</span><span class="x" style="left:197px;font-weight:bold">×</span></div>
<svg class="ic" width="24" height="24" viewBox="0 0 24 24" fill="#111" style="left:733px;top:0"><path d="M15 7h4v10h-4z" opacity=".3"/><path d="M3 13h8v2H3zm0 4h8v2H3zm0-8h8v2H3zm0-4h8v2H3zm10 0v14h8V5h-8zm6 12h-4V7h4v10z"/></svg>
<svg class="ic" width="24" height="24" viewBox="0 0 24 24" fill="#111" style="left:773px;top:0"><path d="M19 15v2H5v-2h14" opacity=".3"/><path d="M3 9h18v2H3zm0-4h18v2H3zm18 8H3v6h18v-6zm-2 4H5v-2h14v2z"/></svg>
</div>
<div class="toolbar" style="left:1238px;width:819px">
<div class="tb" style="left:9px;letter-spacing:0.4px">EDIT</div>
<div class="tb" style="left:60.8px;letter-spacing:1.1px">JSON</div>
<div class="tb b" style="left:118px;letter-spacing:1.15px">PREVIEW</div>
<div class="tb" style="left:204.6px;letter-spacing:0.5px">DIFF</div>
<svg class="ic" width="24" height="24" viewBox="0 0 24 24" fill="#4a88d6" style="left:265px;top:0"><path d="M13 3c-4.970 0-9 4.030-9 9H1l3.890 3.890.07.140L9 12H6c0-3.870 3.130-7 7-7s7 3.130 7 7-3.130 7-7 7c-1.930 0-3.680-.790-4.940-2.060l-1.420 1.420C8.270 19.990 10.510 21 13 21c4.970 0 9-4.030 9-9s-4.030-9-9-9zm-1 5v5l4.280 2.540.72-1.210-3.500-2.080V8H12z"/></svg>
<svg class="ic" width="24" height="24" viewBox="0 0 24 24" fill="#4a88d6" style="left:309px;top:0"><path d="M5 5v14h14V7.830L16.170 5H5zm7 13c-1.660 0-3-1.340-3-3s1.340-3 3-3 3 1.340 3 3-1.340 3-3 3zm3-8H6V6h9v4z" opacity=".3"/><path d="M17 3H5c-1.110 0-2 .9-2 2v14c0 1.100.890 2 2 2h14c1.100 0 2-.900 2-2V7l-4-4zm2 16H5V5h11.170L19 7.830V19zm-7-7c-1.660 0-3 1.340-3 3s1.340 3 3 3 3-1.340 3-3-1.340-3-3-3zM6 6h9v4H6z"/></svg>
<svg class="ic" width="24" height="24" viewBox="0 0 24 24" fill="#4a88d6" style="left:353px;top:0"><path d="M5 19h14V5H5v14zm6-12h6v2h-6V7zm0 4h6v2h-6v-2zm0 4h6v2h-6v-2zM7 7h2v2H7V7zm0 4h2v2H7v-2zm0 4h2v2H7v-2z" opacity=".3"/><path d="M11 7h6v2h-6zm0 4h6v2h-6zm0 4h6v2h-6zM7 7h2v2H7zm0 4h2v2H7zm0 4h2v2H7zM20.100 3H3.900c-.500 0-.900.400-.900.900v16.200c0 .400.400.900.900.900h16.200c.400 0 .900-.500.900-.900V3.900c0-.500-.500-.900-.900-.900zM19 19H5V5h14v14z"/></svg>
</div>
<div id="mid" style="position:absolute;left:408px;top:89px;width:827px;height:1032px;overflow:hidden;background:#fff">
<div class="lab" style="left:10px;top:23px">errorBoundary</div>
<div class="bx dash" style="left:10px;top:43px;width:807px;height:1100px;"></div>
<div class="lab" style="left:21px;top:54px">outer_div</div>
<div class="bx dash" style="left:21px;top:74px;width:785px;height:1100px;"></div>
<div style="position:absolute;left:32px;top:85px;width:900px;height:1100px;background:#fff;box-shadow:-4px 0 6px -1px rgba(0,0,0,.28),0 -4px 6px -1px rgba(0,0,0,.15)"></div>
<div class="lab" style="left:32px;top:85px">Form</div>
<div class="bx dash" style="left:32px;top:105px;width:900px;height:1100px;"></div>
<div class="lab" style="left:43px;top:116px">alertBox</div>
<div class="bx dot" style="left:43px;top:136px;width:778px;height:2px;"></div>
<div class="lab" style="left:43px;top:138px">RelativeDiv</div>
<div class="bx dash" style="left:43px;top:158px;width:778px;height:119px;"></div>
<div class="lab" style="left:54px;top:169px">header</div>
<div class="bx dot" style="left:54px;top:189px;width:756px;height:55px;"></div>
<div style="position:absolute;left:55px;top:190.5px;width:751px;height:45px;background:#eee"></div>
<div style="position:absolute;left:67.20px;top:200.25px;font-size:19.2px;line-height:27px;white-space:nowrap;font-weight:bold;color:#1a1a1a">New User</div>
<svg class="ic" width="22.4" height="22.4" viewBox="0 0 24 24" fill="#8a8a8a" style="left:766.7px;top:190px"><path d="M19 6.410L17.590 5 12 10.590 6.410 5 5 6.410 10.590 12 5 17.590 6.410 19 12 13.410 17.590 19 19 17.590 13.410 12z"/></svg>
<div class="lab" style="left:54px;top:244px">close</div>
<div class="bx dot" style="left:54px;top:264px;width:756px;height:2px;"></div>
<div class="lab" style="left:43px;top:277px">Flex Row Layout-1</div>
<div class="bx dash" style="left:43px;top:297px;width:778px;height:1000px;"></div>
<div class="lab" style="left:54px;top:308px">padding</div>
<div class="bx dash" style="left:54px;top:328px;width:362px;height:1000px;"></div>
<div class="lab" style="left:416px;top:308px">PermissionsField</div>
<div class="bx solid" style="left:416px;top:328px;width:242px;height:383.5px;"></div>
<div style="position:absolute;left:427.50px;top:338.25px;font-size:18.4px;line-height:27px;white-space:nowrap;color:#6a6a6a;letter-spacing:.1px">Permissions</div>
<svg class="ic" width="24" height="24" viewBox="0 0 24 24" fill="#5c5c5c" style="left:425px;top:374px"><path d="M19 5v14H5V5h14m0-2H5c-1.100 0-2 .900-2 2v14c0 1.100.900 2 2 2h14c1.100 0 2-.900 2-2V5c0-1.100-.900-2-2-2z"/></svg>
<div style="position:absolute;left:458.00px;top:373.25px;font-size:18.4px;line-height:27px;white-space:nowrap;color:#1f1f1f;letter-spacing:.2px">file_read</div>
<svg class="ic" width="24" height="24" viewBox="0 0 24 24" fill="#5c5c5c" style="left:425px;top:416px"><path d="M19 5v14H5V5h14m0-2H5c-1.100 0-2 .900-2 2v14c0 1.100.900 2 2 2h14c1.100 0 2-.900 2-2V5c0-1.100-.900-2-2-2z"/></svg>
<div style="position:absolute;left:458.00px;top:415.25px;font-size:18.4px;line-height:27px;white-space:nowrap;color:#1f1f1f;letter-spacing:.2px">file_write</div>
<svg class="ic" width="24" height="24" viewBox="0 0 24 24" fill="#5c5c5c" style="left:425px;top:458px"><path d="M19 5v14H5V5h14m0-2H5c-1.100 0-2 .900-2 2v14c0 1.100.900 2 2 2h14c1.100 0 2-.900 2-2V5c0-1.100-.900-2-2-2z"/></svg>
<div style="position:absolute;left:458.00px;top:457.25px;font-size:18.4px;line-height:27px;white-space:nowrap;color:#1f1f1f;letter-spacing:.2px">git_read</div>
<svg class="ic" width="24" height="24" viewBox="0 0 24 24" fill="#5c5c5c" style="left:425px;top:500px"><path d="M19 5v14H5V5h14m0-2H5c-1.100 0-2 .900-2 2v14c0 1.100.900 2 2 2h14c1.100 0 2-.900 2-2V5c0-1.100-.900-2-2-2z"/></svg>
<div style="position:absolute;left:458.00px;top:499.25px;font-size:18.4px;line-height:27px;white-space:nowrap;color:#1f1f1f;letter-spacing:.2px">git_write</div>
<svg class="ic" width="24" height="24" viewBox="0 0 24 24" fill="#5c5c5c" style="left:425px;top:542px"><path d="M19 5v14H5V5h14m0-2H5c-1.100 0-2 .900-2 2v14c0 1.100.900 2 2 2h14c1.100 0 2-.900 2-2V5c0-1.100-.900-2-2-2z"/></svg>
<div style="position:absolute;left:458.00px;top:541.25px;font-size:18.4px;line-height:27px;white-space:nowrap;color:#1f1f1f;letter-spacing:.2px">cms_user</div>
<svg class="ic" width="24" height="24" viewBox="0 0 24 24" fill="#5c5c5c" style="left:425px;top:584px"><path d="M19 5v14H5V5h14m0-2H5c-1.100 0-2 .900-2 2v14c0 1.100.900 2 2 2h14c1.100 0 2-.900 2-2V5c0-1.100-.900-2-2-2z"/></svg>
<div style="position:absolute;left:458.00px;top:583.25px;font-size:18.4px;line-height:27px;white-space:nowrap;color:#1f1f1f;letter-spacing:.2px">change_workspace</div>
<svg class="ic" width="24" height="24" viewBox="0 0 24 24" fill="#5c5c5c" style="left:425px;top:626px"><path d="M19 5v14H5V5h14m0-2H5c-1.100 0-2 .900-2 2v14c0 1.100.900 2 2 2h14c1.100 0 2-.900 2-2V5c0-1.100-.900-2-2-2z"/></svg>
<div style="position:absolute;left:458.00px;top:625.25px;font-size:18.4px;line-height:27px;white-space:nowrap;color:#1f1f1f;letter-spacing:.2px">cms_admin</div>
<svg class="ic" width="24" height="24" viewBox="0 0 24 24" fill="#5c5c5c" style="left:425px;top:668px"><path d="M19 5v14H5V5h14m0-2H5c-1.100 0-2 .900-2 2v14c0 1.100.900 2 2 2h14c1.100 0 2-.900 2-2V5c0-1.100-.900-2-2-2z"/></svg>
<div style="position:absolute;left:458.00px;top:667.25px;font-size:18.4px;line-height:27px;white-space:nowrap;color:#1f1f1f;letter-spacing:.2px">db_write</div>
<div class="lab" style="left:75px;top:349px">usernameField</div>
<div class="bx dot" style="left:75px;top:369px;width:320px;height:80.5px;"></div>
<div class="inp" style="left:86px;top:380.3px;width:220px;height:58.5px"></div>
<div style="position:absolute;left:100.20px;top:395.25px;font-size:18.4px;line-height:27px;white-space:nowrap;color:#686868;letter-spacing:.15px">Username</div>
<div class="lab" style="left:75px;top:450.5px">name</div>
<div class="bx dot" style="left:75px;top:470.5px;width:320px;height:80.5px;"></div>
<div class="inp" style="left:86px;top:481.79999999999995px;width:220px;height:58.5px"></div>
<div style="position:absolute;left:100.20px;top:496.25px;font-size:18.4px;line-height:27px;white-space:nowrap;color:#686868;letter-spacing:.15px">Name</div>
<div class="lab" style="left:75px;top:552px">email</div>
<div class="bx dot" style="left:75px;top:572px;width:320px;height:80.5px;"></div>
<div class="inp" style="left:86px;top:583.3px;width:280px;height:58.5px"></div>
<div style="position:absolute;left:100.20px;top:598.25px;font-size:18.4px;line-height:27px;white-space:nowrap;color:#686868;letter-spacing:.15px">Email</div>
<div class="lab" style="left:75px;top:653.3px">workspace</div>
<div class="bx dot" style="left:75px;top:673.3px;width:320px;height:80.5px;"></div>
<div class="inp" style="left:86px;top:684.5999999999999px;width:280px;height:58.5px"></div>
<div style="position:absolute;left:100.20px;top:699.25px;font-size:18.4px;line-height:27px;white-space:nowrap;color:#686868;letter-spacing:.15px">Workspace</div>
<div class="lab" style="left:75px;top:755.3px">descrip</div>
<div class="bx dot" style="left:75px;top:775px;width:320px;height:63.3px;"></div>
<div style="position:absolute;left:86.00px;top:785.25px;font-size:14.3px;line-height:22px;white-space:nowrap;color:#1a1a1a">Please use a strong password that's at least 8</div>
<div style="position:absolute;left:86.00px;top:806.25px;font-size:14.3px;line-height:22px;white-space:nowrap;color:#1a1a1a">characters long and difficult to guess.</div>
<div class="lab" style="left:75px;top:839.2px">newPasswordField</div>
<div class="bx dot" style="left:75px;top:859.2px;width:320px;height:80.5px;"></div>
<div class="inp" style="left:86px;top:870.5px;width:220px;height:58.5px"></div>
<div style="position:absolute;left:100.20px;top:885.25px;font-size:18.4px;line-height:27px;white-space:nowrap;color:#686868;letter-spacing:.15px">Password</div>
<div class="lab" style="left:75px;top:940.4000000000001px">passwordConfirm</div>
<div class="bx dot" style="left:75px;top:960.4000000000001px;width:320px;height:80.5px;"></div>
<div class="inp" style="left:86px;top:971.7px;width:220px;height:58.5px"></div>
<div style="position:absolute;left:100.20px;top:986.25px;font-size:18.4px;line-height:27px;white-space:nowrap;color:#686868;letter-spacing:.15px">Repeat Password</div>
<div style="position:absolute;left:816px;top:85px;width:0;height:1000px;border-left:1px dashed #1d2588"></div>
<div style="position:absolute;left:805px;top:85px;width:0;height:1000px;border-left:1px dashed #1d2588"></div>
<div class="sbar" style="left:818.2px;top:2.200000000000003px;width:6.800px;height:668.500px;background:linear-gradient(180deg,rgba(0,0,0,.42) 0,rgba(0,0,0,.42) 80px,rgba(0,0,0,.56) 84px,rgba(0,0,0,.56) 100%)"></div>
<div class="sbar" style="left:3px;top:1028.5px;width:801px;height:6px"></div>
</div>
<div id="right" style="position:absolute;left:1238px;top:89px;width:819px;height:1032px;overflow:hidden;background:#fff">
<div style="position:absolute;left:0.40px;top:-1.75px;font-size:19.2px;line-height:27px;white-space:nowrap;font-weight:bold;color:#1a1a1a">material_ui/input/CheckboxGroup</div>
<div style="position:absolute;left:12.30px;top:40.25px;font-size:19.2px;line-height:27px;white-space:nowrap;font-weight:bold;color:#1a1a1a">Checkbox Group</div>
<div style="position:absolute;left:12.30px;top:83.25px;font-size:18px;line-height:26px;white-space:nowrap;">Allows one or more items to be selected from a group. Based on the <span class="lnk">Material-UI Checkboxes</span></div>
<div style="position:absolute;left:12.30px;top:110.25px;font-size:18px;line-height:26px;white-space:nowrap;">component. A Checkbox Group component should be enclosed within a form.</div>
<div style="position:absolute;left:21.00px;top:145.25px;font-size:18px;line-height:26px;white-space:nowrap;">label</div>
<div style="position:absolute;left:207.00px;top:145.25px;font-size:18px;line-height:26px;white-space:nowrap;">The Checkbox Group label.</div>
<div style="position:absolute;left:21.00px;top:187.25px;font-size:18px;line-height:26px;white-space:nowrap;">color</div>
<div style="position:absolute;left:207.00px;top:187.25px;font-size:18px;line-height:26px;white-space:nowrap;"><code>primary</code> or <code>secondary</code>.</div>
<div style="position:absolute;left:21.00px;top:243.25px;font-size:18px;line-height:26px;white-space:nowrap;">checkboxesTopic</div>
<div style="position:absolute;left:207.00px;top:230.25px;font-size:18px;line-height:26px;white-space:nowrap;">The topic that provides the checkbox values and labels. e.g.</div>
<div style="position:absolute;left:207.00px;top:256.25px;font-size:18px;line-height:26px;white-space:nowrap;"><code>/Database/checkboxes.sql</code> . See below for the format of the JSON.</div>
<div style="position:absolute;left:21.00px;top:299.25px;font-size:18px;line-height:26px;white-space:nowrap;">labelPlacement</div>
<div style="position:absolute;left:207.00px;top:299.25px;font-size:18px;line-height:26px;white-space:nowrap;"><code>top</code>, <code>bottom</code>, <code>start</code> or <code>end</code>. The default is <code>end</code>.</div>
<div style="position:absolute;left:21.00px;top:341.25px;font-size:18px;line-height:26px;white-space:nowrap;">subscribeToTopic</div>
<div style="position:absolute;left:21.00px;top:368.25px;font-size:18px;line-height:26px;white-space:nowrap;">[optional]</div>
<div style="position:absolute;left:207.00px;top:341.25px;font-size:18px;line-height:26px;white-space:nowrap;">Provides the initial selected checkboxes, as a comma separated list of</div>
<div style="position:absolute;left:207.00px;top:368.25px;font-size:18px;line-height:26px;white-space:nowrap;">values.</div>
<div style="position:absolute;left:21.00px;top:423.25px;font-size:18px;line-height:26px;white-space:nowrap;">publishToTopic</div>
<div style="position:absolute;left:207.00px;top:410.25px;font-size:18px;line-height:26px;white-space:nowrap;">The topic for where to publish a comma separated list of selected</div>
<div style="position:absolute;left:207.00px;top:436.25px;font-size:18px;line-height:26px;white-space:nowrap;">checkbox values. e.g. form#checkboxes</div>
<div style="position:absolute;left:20.00px;top:509.25px;font-size:18px;line-height:26px;white-space:nowrap;color:#7a7a7a">Toppings</div>
<svg class="ic" width="24" height="24" viewBox="0 0 24 24" fill="#5c5c5c" style="left:18px;top:543px"><path d="M19 5v14H5V5h14m0-2H5c-1.100 0-2 .900-2 2v14c0 1.100.900 2 2 2h14c1.100 0 2-.900 2-2V5c0-1.100-.900-2-2-2z"/></svg>
<div style="position:absolute;left:51.00px;top:542.25px;font-size:18px;line-height:26px;white-space:nowrap;color:#1f1f1f">Pineapple</div>
<svg class="ic" width="24" height="24" viewBox="0 0 24 24" fill="#3f51b5" style="left:18px;top:585px"><path d="M19 3H5c-1.110 0-2 .900-2 2v14c0 1.100.890 2 2 2h14c1.110 0 2-.900 2-2V5c0-1.100-.890-2-2-2zm-9 14l-5-5 1.410-1.410L10 14.170l7.590-7.590L19 8l-9 9z"/></svg>
<div style="position:absolute;left:51.00px;top:584.25px;font-size:18px;line-height:26px;white-space:nowrap;color:#1f1f1f">Peppers</div>
<svg class="ic" width="24" height="24" viewBox="0 0 24 24" fill="#5c5c5c" style="left:18px;top:627px"><path d="M19 5v14H5V5h14m0-2H5c-1.100 0-2 .900-2 2v14c0 1.100.900 2 2 2h14c1.100 0 2-.900 2-2V5c0-1.100-.900-2-2-2z"/></svg>
<div style="position:absolute;left:51.00px;top:626.25px;font-size:18px;line-height:26px;white-space:nowrap;color:#1f1f1f">Pepperoni</div>
<svg class="ic" width="24" height="24" viewBox="0 0 24 24" fill="#5c5c5c" style="left:18px;top:669px"><path d="M19 5v14H5V5h14m0-2H5c-1.100 0-2 .900-2 2v14c0 1.100.900 2 2 2h14c1.100 0 2-.900 2-2V5c0-1.100-.900-2-2-2z"/></svg>
<div style="position:absolute;left:51.00px;top:668.25px;font-size:18px;line-height:26px;white-space:nowrap;color:#1f1f1f">Onions</div>
<svg class="ic" width="24" height="24" viewBox="0 0 24 24" fill="#5c5c5c" style="left:18px;top:711px"><path d="M19 5v14H5V5h14m0-2H5c-1.100 0-2 .900-2 2v14c0 1.100.900 2 2 2h14c1.100 0 2-.900 2-2V5c0-1.100-.900-2-2-2z"/></svg>
<div style="position:absolute;left:51.00px;top:710.25px;font-size:18px;line-height:26px;white-space:nowrap;color:#1f1f1f">Mushrooms</div>
<svg class="ic" width="24" height="24" viewBox="0 0 24 24" fill="#3f51b5" style="left:18px;top:753px"><path d="M19 3H5c-1.110 0-2 .900-2 2v14c0 1.100.890 2 2 2h14c1.110 0 2-.900 2-2V5c0-1.100-.890-2-2-2zm-9 14l-5-5 1.410-1.410L10 14.170l7.590-7.590L19 8l-9 9z"/></svg>
<div style="position:absolute;left:51.00px;top:752.25px;font-size:18px;line-height:26px;white-space:nowrap;color:#1f1f1f">Extra Cheese</div>
<div style="position:absolute;left:20.00px;top:803.25px;font-size:18.6px;line-height:27px;white-space:nowrap;color:#1f1f1f;letter-spacing:.33px">Selected value:</div>
<div style="position:absolute;left:162.30px;top:803.25px;font-size:18.8px;line-height:27px;white-space:nowrap;font-weight:bold;color:#1d7f1f;letter-spacing:.3px;-webkit-text-stroke:.75px #1d7f1f;transform:scaleX(1.115);transform-origin:0 0">peppers,cheese</div>
<div style="position:absolute;left:12.20px;top:879.25px;font-size:18px;line-height:26px;white-space:nowrap;">/Resources/toppingsCheckboxes.json</div>
<div style="position:absolute;left:0px;top:938px;width:387px;height:100px;background:#fff;overflow:hidden">
<div style="position:absolute;left:0;top:0;width:333px;height:18px;border-top:2px solid #eee;border-bottom:2px solid #eee"></div>
<div style="position:absolute;left:29px;top:36px;width:1px;height:36px;background:#d3d3d3"></div>
<div style="position:absolute;left:0.500px;top:2.500px;width:6.500px;height:13.500px;border:1px solid #c9c9c9;background:#ececec"></div>
<pre class="mono" style="top:1px">[</pre>
<pre class="mono" style="top:19px">    {</pre>
<pre class="mono" style="top:37px">        <span style="color:#a31515">"value"</span>: <span style="color:#0451a5">"pineapple"</span>,</pre>
<pre class="mono" style="top:55px">        <span style="color:#a31515">"label"</span>: <span style="color:#0451a5">"Pineapple"</span></pre>
<pre class="mono" style="top:73px">    },</pre>
<pre class="mono" style="top:91px">    {</pre>
<div style="position:absolute;left:341px;top:0;width:46px;height:1.500px;background:#c7d6f0"></div>
<div style="position:absolute;left:348.500px;top:4.5px;width:6.500px;height:2.200px;background:#e3a3a3"></div>
<div style="position:absolute;left:357px;top:4.5px;width:13px;height:2.200px;background:#9bb5dd"></div>
<div style="position:absolute;left:343.500px;top:8px;width:1px;height:3px;background:#888"></div>
<div style="position:absolute;left:348.500px;top:12.5px;width:6.500px;height:2.200px;background:#e3a3a3"></div>
<div style="position:absolute;left:357px;top:12.5px;width:8px;height:2.200px;background:#9bb5dd"></div>
<div style="position:absolute;left:343.500px;top:16px;width:1px;height:3px;background:#888"></div>
<div style="position:absolute;left:348.500px;top:20.5px;width:6.500px;height:2.200px;background:#e3a3a3"></div>
<div style="position:absolute;left:357px;top:20.5px;width:13px;height:2.200px;background:#9bb5dd"></div>
<div style="position:absolute;left:343.500px;top:24px;width:1px;height:3px;background:#888"></div>
<div style="position:absolute;left:348.500px;top:28.5px;width:6.500px;height:2.200px;background:#e3a3a3"></div>
<div style="position:absolute;left:357px;top:28.5px;width:7px;height:2.200px;background:#9bb5dd"></div>
<div style="position:absolute;left:343.500px;top:32px;width:1px;height:3px;background:#888"></div>
<div style="position:absolute;left:348.500px;top:36.5px;width:6.500px;height:2.200px;background:#e3a3a3"></div>
<div style="position:absolute;left:357px;top:36.5px;width:11px;height:2.200px;background:#9bb5dd"></div>
<div style="position:absolute;left:343.500px;top:40px;width:1px;height:3px;background:#888"></div>
<div style="position:absolute;left:348.500px;top:44.5px;width:6.500px;height:2.200px;background:#e3a3a3"></div>
<div style="position:absolute;left:357px;top:44.5px;width:6px;height:2.200px;background:#9bb5dd"></div>
<div style="position:absolute;left:343.500px;top:48px;width:1px;height:3px;background:#888"></div>
<div style="position:absolute;left:386px;top:0;width:1px;height:100px;background:#ddd"></div>
</div>
<div style="position:absolute;left:387px;top:938px;width:13px;height:2px;background:#333"></div>
<div style="position:absolute;left:387px;top:940px;width:6px;height:13px;background:#8a8a8a"></div>
<div class="sbar" style="left:809.2px;top:2.200000000000003px;width:6.700px;height:786px;background:#858585"></div>
</div>
<div style="position:absolute;left:2056px;top:40px;width:1px;height:1081px;background:rgba(0,0,0,.42)"></div>
</body></html>
